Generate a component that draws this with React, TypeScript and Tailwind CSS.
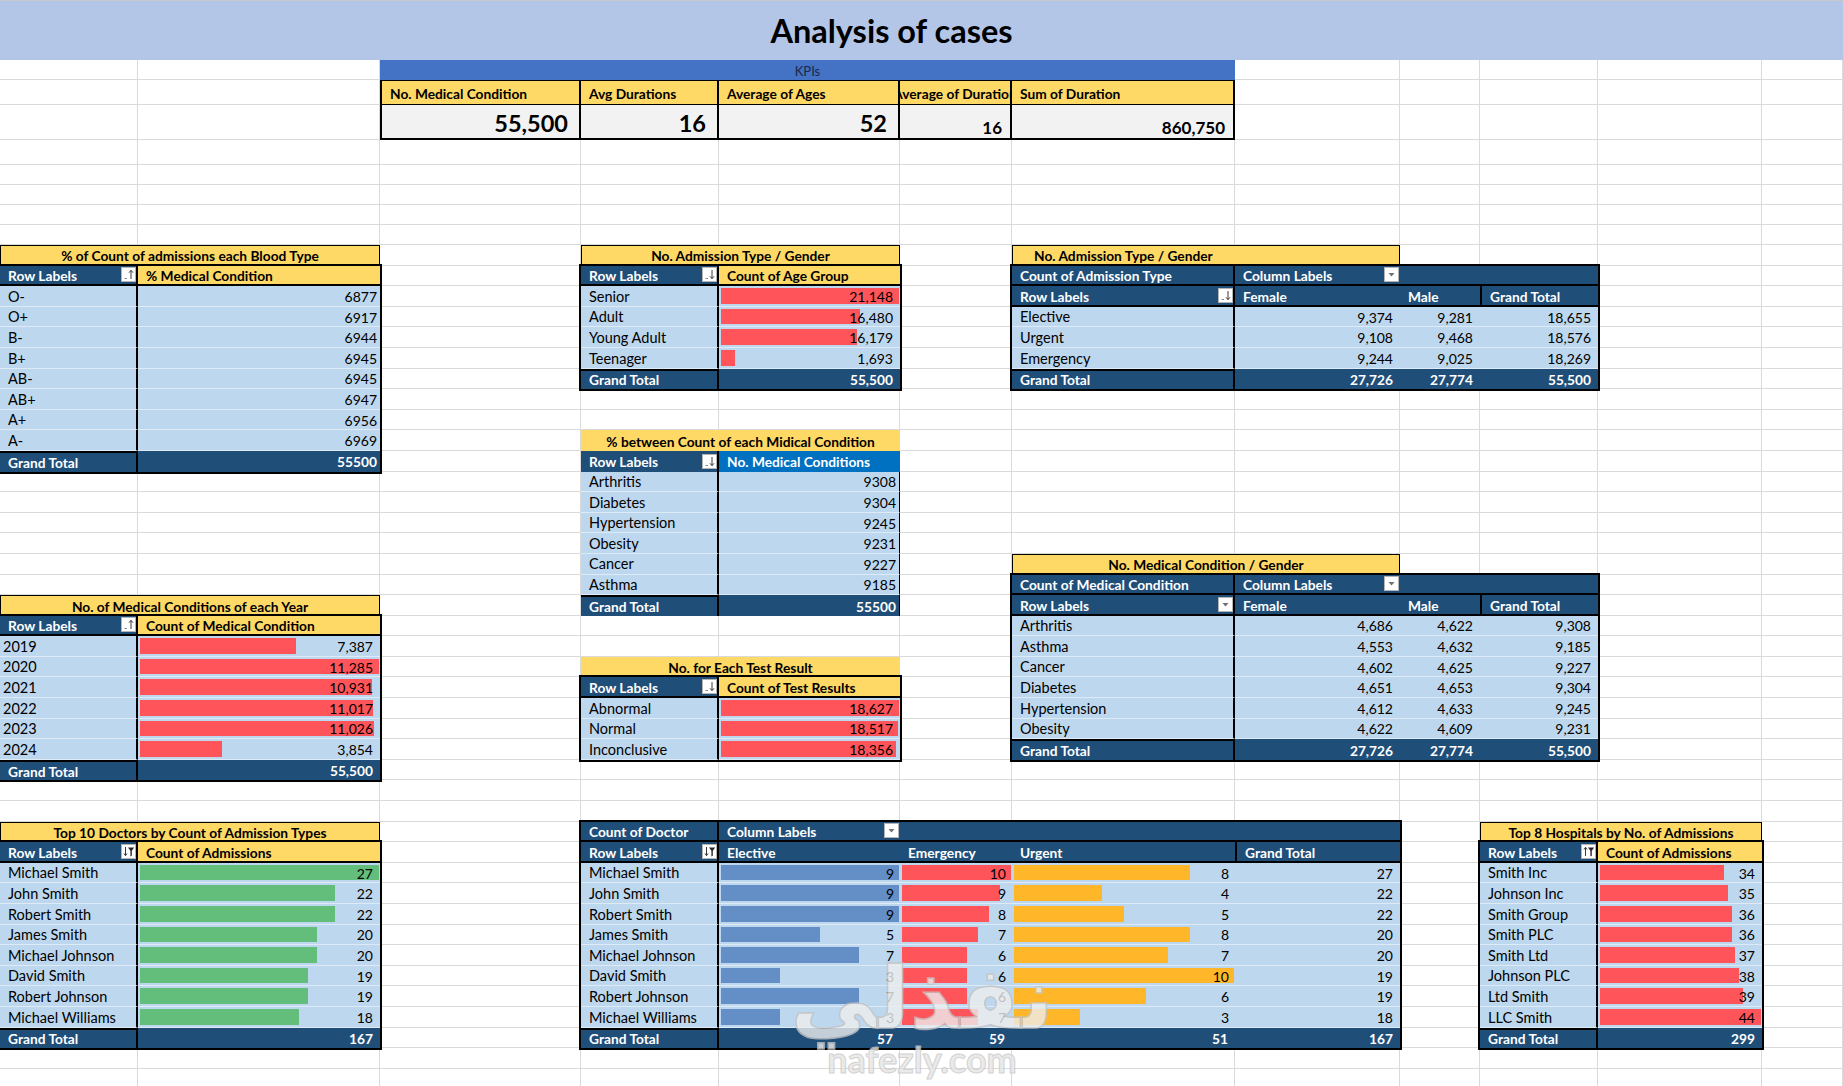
import React from 'react';

type IconKind = 'sortDown' | 'sortUp' | 'drop' | 'filterDown' | 'filterUp';
type BarSpec = { color: string; max: number };
type Row = { label: string; value: string; n: number };

const RH = 'h-[20.6px]';
const HB = 'text-[13.75px] font-bold leading-none';
const LB = 'text-[14.5px] leading-none';

function Glyph({ kind }: { kind: IconKind }) {
  if (kind === 'drop') {
    return (
      <svg width="9" height="9" viewBox="0 0 9 9">
        <path d="M1.5 3h6L4.5 6.5z" fill="#707070" />
      </svg>
    );
  }
  if (kind === 'sortDown' || kind === 'sortUp') {
    return (
      <svg width="13" height="13" viewBox="0 0 13 13">
        <path d="M2.5 10.5h2.5" stroke="#8a8a8a" strokeWidth="1" />
        {kind === 'sortDown' ? (
          <path d="M9 2v8.5M7 8.3l2 2.4 2-2.4" stroke="#3a3a3a" strokeWidth="1" fill="none" />
        ) : (
          <path d="M9 11V2.5M7 4.7l2-2.4 2 2.4" stroke="#3a3a3a" strokeWidth="1" fill="none" />
        )}
      </svg>
    );
  }
  return (
    <svg width="13" height="13" viewBox="0 0 13 13">
      {kind === 'filterDown' ? (
        <path d="M3.5 2v8.5M2 8.5l1.5 2.2 1.5-2.2" stroke="#3a3a3a" strokeWidth="1" fill="none" />
      ) : (
        <path d="M3.5 11V2.5M2 4.5l1.5-2.2 1.5 2.2" stroke="#3a3a3a" strokeWidth="1" fill="none" />
      )}
      <path d="M6 2.5h6.2l-2.4 3.3v4.9l-1.4 0.9V5.8z" fill="#262626" />
    </svg>
  );
}

function IconBox({ kind }: { kind: IconKind }) {
  return (
    <span className="ml-auto shrink-0 w-[15px] h-[15px] bg-white border border-[#b4b4b4] flex items-center justify-center">
      <Glyph kind={kind} />
    </span>
  );
}

function ValueCell({ value, n, bar, pad, extra }: { value: string; n: number; bar?: BarSpec; pad: string; extra?: string }) {
  const frac = bar ? n / bar.max : 0;
  return (
    <div className={`relative flex items-center justify-end bg-[#bdd7ee] border-b border-b-[#deebf7] text-[14px] leading-none ${pad} ${extra ?? ''}`}>
      {bar && (
        <div className="absolute left-[2px] right-[1px] top-[2px] bottom-[2px]">
          <div className={`h-full ${bar.color}`} style={{ width: `${frac * 100}%` }} />
        </div>
      )}
      <span className="relative pt-[2px]">{value}</span>
    </div>
  );
}

type T2Props = {
  pos: string;
  cols: string;
  title: string;
  titleBorder?: boolean;
  icon: IconKind;
  valueHead: string;
  valueHeadClass: string;
  rows: Row[];
  total?: string;
  bar?: BarSpec;
  numPad: string;
  labelPad?: string;
  ring?: boolean;
  valueEdge?: string;
};

function Table2(p: T2Props) {
  const ring = p.ring !== false;
  return (
    <div className={`${p.pos} self-start flex flex-col`}>
      <div
        className={`${RH} bg-[#ffd966] flex items-center justify-center ${HB} ${
          p.titleBorder !== false ? 'border border-black' : ''
        }`}
      >
        <span className="pt-[2px] whitespace-nowrap">{p.title}</span>
      </div>
      <div className={ring ? 'ring-2 ring-black' : ''}>
        <div className={`grid ${p.cols} ${RH} ${HB} ${ring ? 'border-b-2 border-black' : ''}`}>
          <div className="bg-[#1f4e78] text-white flex items-center pl-[8px] border-r-2 border-black">
            <span className="pt-[2px] whitespace-nowrap">Row Labels</span>
            <IconBox kind={p.icon} />
          </div>
          <div className={`flex items-center pl-[8px] ${p.valueHeadClass}`}>
            <span className="pt-[2px] whitespace-nowrap">{p.valueHead}</span>
          </div>
        </div>
        {p.rows.map((r) => (
          <div key={r.label} className={`grid ${p.cols} ${RH}`}>
            <div
              className={`bg-[#bdd7ee] border-b border-b-[#deebf7] border-r-2 border-r-black flex items-center ${LB} ${
                p.labelPad ?? 'pl-[8px]'
              }`}
            >
              <span className="pt-[2px] whitespace-nowrap">{r.label}</span>
            </div>
            <ValueCell value={r.value} n={r.n} bar={p.bar} pad={p.numPad} extra={p.valueEdge} />
          </div>
        ))}
        {p.total && (
          <div className={`grid ${p.cols} ${RH} bg-[#1f4e78] text-white ${HB}`}>
            <div className="flex items-center pl-[8px] border-r-2 border-r-black border-t-2 border-t-black">
              <span className="pt-[1px]">Grand Total</span>
            </div>
            <div className={`flex items-center justify-end ${p.numPad} ${p.valueEdge ?? ''}`}>
              <span className="pt-[2px]">{p.total}</span>
            </div>
          </div>
        )}
      </div>
    </div>
  );
}

type R4 = { label: string; f: string; m: string; t: string };

function Pivot4({
  titlePos,
  bodyPos,
  title,
  titleCentered,
  head1,
  icon,
  rows,
  total,
}: {
  titlePos: string;
  bodyPos: string;
  title: string;
  titleCentered: boolean;
  head1: string;
  icon: IconKind;
  rows: R4[];
  total: [string, string, string];
}) {
  const cols = 'grid-cols-[223px_165px_80px_118px]';
  const cell = 'flex items-center justify-end pr-[7px] bg-[#bdd7ee] border-b border-b-[#deebf7] text-[14px] leading-none';
  return (
    <>
      <div
        className={`${titlePos} self-start ${RH} bg-[#ffd966] border border-black ${HB} flex items-center ${
          titleCentered ? 'justify-center' : 'pl-[21px]'
        }`}
      >
        <span className="pt-[2px] whitespace-nowrap">{title}</span>
      </div>
      <div className={`${bodyPos} self-start ring-2 ring-black`}>
        <div className={`grid ${cols} ${RH} bg-[#1f4e78] text-white ${HB} border-b-2 border-black`}>
          <div className="flex items-center pl-[8px] border-r-2 border-black">
            <span className="pt-[2px] whitespace-nowrap">{head1}</span>
          </div>
          <div className="flex items-center pl-[8px] pr-[1px]">
            <span className="pt-[2px] whitespace-nowrap">Column Labels</span>
            <IconBox kind="drop" />
          </div>
          <div />
          <div />
        </div>
        <div className={`grid ${cols} ${RH} bg-[#1f4e78] text-white ${HB} border-b-2 border-black`}>
          <div className="flex items-center pl-[8px] border-r-2 border-black">
            <span className="pt-[2px]">Row Labels</span>
            <IconBox kind={icon} />
          </div>
          <div className="flex items-center pl-[8px]">
            <span className="pt-[2px]">Female</span>
          </div>
          <div className="flex items-center pl-[8px]">
            <span className="pt-[2px]">Male</span>
          </div>
          <div className="flex items-center pl-[8px] border-l-2 border-black">
            <span className="pt-[2px]">Grand Total</span>
          </div>
        </div>
        {rows.map((r) => (
          <div key={r.label} className={`grid ${cols} ${RH}`}>
            <div className={`bg-[#bdd7ee] border-b border-b-[#deebf7] border-r-2 border-r-black flex items-center pl-[8px] ${LB}`}>
              <span className="pt-[2px]">{r.label}</span>
            </div>
            <div className={cell}>
              <span className="pt-[2px]">{r.f}</span>
            </div>
            <div className={cell}>
              <span className="pt-[2px]">{r.m}</span>
            </div>
            <div className={cell}>
              <span className="pt-[2px]">{r.t}</span>
            </div>
          </div>
        ))}
        <div className={`grid ${cols} ${RH} bg-[#1f4e78] text-white ${HB}`}>
          <div className="flex items-center pl-[8px] border-r-2 border-r-black border-t-2 border-t-black">
            <span className="pt-[1px]">Grand Total</span>
          </div>
          {total.map((t, i) => (
            <div key={i} className="flex items-center justify-end pr-[7px]">
              <span className="pt-[2px]">{t}</span>
            </div>
          ))}
        </div>
      </div>
    </>
  );
}

const docRows = [
  { name: 'Michael Smith', e: 9, em: 10, u: 8, t: 27 },
  { name: 'John Smith', e: 9, em: 9, u: 4, t: 22 },
  { name: 'Robert Smith', e: 9, em: 8, u: 5, t: 22 },
  { name: 'James Smith', e: 5, em: 7, u: 8, t: 20 },
  { name: 'Michael Johnson', e: 7, em: 6, u: 7, t: 20 },
  { name: 'David Smith', e: 3, em: 6, u: 10, t: 19 },
  { name: 'Robert Johnson', e: 7, em: 6, u: 6, t: 19 },
  { name: 'Michael Williams', e: 3, em: 7, u: 3, t: 18 },
];

function CountDoctor() {
  const cols = 'grid-cols-[138px_181px_112px_223px_165px]';
  const head = `grid ${cols} ${RH} bg-[#1f4e78] text-white ${HB} border-b-2 border-black`;
  return (
    <div className="col-start-4 col-span-5 row-start-38 row-span-11 self-start ring-2 ring-black">
      <div className={head}>
        <div className="flex items-center pl-[8px] border-r-2 border-black">
          <span className="pt-[2px] whitespace-nowrap">Count of Doctor</span>
        </div>
        <div className="flex items-center pl-[8px] pr-[1px]">
          <span className="pt-[2px] whitespace-nowrap">Column Labels</span>
          <IconBox kind="drop" />
        </div>
        <div />
        <div />
        <div />
      </div>
      <div className={head}>
        <div className="flex items-center pl-[8px] border-r-2 border-black">
          <span className="pt-[2px]">Row Labels</span>
          <IconBox kind="filterDown" />
        </div>
        <div className="flex items-center pl-[8px]">
          <span className="pt-[2px]">Elective</span>
        </div>
        <div className="flex items-center pl-[8px]">
          <span className="pt-[2px]">Emergency</span>
        </div>
        <div className="flex items-center pl-[8px]">
          <span className="pt-[2px]">Urgent</span>
        </div>
        <div className="flex items-center pl-[8px] border-l-2 border-black">
          <span className="pt-[2px]">Grand Total</span>
        </div>
      </div>
      {docRows.map((r) => (
        <div key={r.name} className={`grid ${cols} ${RH}`}>
          <div className={`bg-[#bdd7ee] border-b border-b-[#deebf7] border-r-2 border-r-black flex items-center pl-[8px] ${LB}`}>
            <span className="pt-[2px] whitespace-nowrap">{r.name}</span>
          </div>
          <ValueCell value={String(r.e)} n={r.e} bar={{ color: 'bg-[#638ec6]', max: 9 }} pad="pr-[6px]" />
          <ValueCell value={String(r.em)} n={r.em} bar={{ color: 'bg-[#ff555a]', max: 10 }} pad="pr-[6px]" />
          <ValueCell value={String(r.u)} n={r.u} bar={{ color: 'bg-[#ffb628]', max: 10 }} pad="pr-[6px]" />
          <ValueCell value={String(r.t)} n={r.t} pad="pr-[7px]" />
        </div>
      ))}
      <div className={`grid ${cols} ${RH} bg-[#1f4e78] text-white ${HB}`}>
        <div className="flex items-center pl-[8px] border-r-2 border-r-black border-t-2 border-t-black">
          <span className="pt-[1px]">Grand Total</span>
        </div>
        {['57', '59', '51', '167'].map((t, i) => (
          <div key={i} className="flex items-center justify-end pr-[7px]">
            <span className="pt-[2px]">{t}</span>
          </div>
        ))}
      </div>
    </div>
  );
}

function Kpis() {
  const lab = 'bg-[#ffd966] border-t border-b border-r-2 border-black flex items-end pb-[3px] text-[13.75px] font-bold leading-none whitespace-nowrap overflow-hidden';
  const val = 'bg-[#f2f2f2] border-b-2 border-r-2 border-black flex items-end justify-end font-bold leading-none';
  return (
    <>
      <div className="col-start-3 col-span-5 row-start-2 bg-[#4472c4] flex items-center justify-center text-[13px] leading-none text-[#18284a]">
        <span className="pt-[3px]">KPIs</span>
      </div>
      <div className="col-start-3 col-span-5 row-start-3 row-span-2 grid grid-cols-subgrid grid-rows-subgrid">
        <div className={`${lab} border-l-2 pl-[8px]`}>No. Medical Condition</div>
        <div className={`${lab} pl-[8px]`}>Avg Durations</div>
        <div className={`${lab} pl-[8px]`}>Average of Ages</div>
        <div className={`${lab} justify-center`}>Average of Duration</div>
        <div className={`${lab} pl-[8px]`}>Sum of Duration</div>
        <div className={`${val} border-l-2 pr-[11px] pb-[3px] text-[23.5px]`}>55,500</div>
        <div className={`${val} pr-[11px] pb-[3px] text-[23.5px]`}>16</div>
        <div className={`${val} pr-[11px] pb-[3px] text-[23.5px]`}>52</div>
        <div className={`${val} pr-[8px] pb-[2px] text-[17px]`}>16</div>
        <div className={`${val} pr-[8px] pb-[2px] text-[17px]`}>860,750</div>
      </div>
    </>
  );
}

function Watermark() {
  return (
    <div className="absolute left-[797px] top-[960px] w-[250px] flex flex-col items-center pointer-events-none opacity-80">
      <div
        dir="rtl"
        className="text-[86px] leading-[0.9] font-bold text-[#eeeeee] [-webkit-text-stroke:1.5px_#c4c4c4] font-['DejaVu_Sans',sans-serif]"
      >
        نفذلي
      </div>
      <div className="mt-[4px] text-[36px] leading-none font-bold text-[#e6e6e6] [-webkit-text-stroke:1px_#c8c8c8]">nafezly.com</div>
    </div>
  );
}

const r = (label: string, value: string): Row => ({ label, value, n: Number(value.replace(/,/g, '')) });

export default function App() {
  return (
    <div className="relative w-[1843px] h-[1086px] overflow-hidden bg-white text-black font-['Lato',sans-serif]">
      <div className="grid h-full grid-cols-[138px_242px_201px_138px_181px_112px_223px_165px_80px_118px_164px_81px] grid-rows-[60px_20px_25px_35px_25px_20px_20px_20px_20px_repeat(41,20.6px)]">
        {Array.from({ length: 400 }).map((_, i) => (
          <div key={i} className="border-r border-b border-[#dadada]" />
        ))}

        <div className="col-start-1 col-span-12 row-start-1 bg-[#b4c6e7] border-t border-[#c8c8c8] flex items-center justify-center pr-[60px]">
          <span className="text-[32.5px] font-bold leading-none pt-[2px]">Analysis of cases</span>
        </div>

        <Kpis />

        <Table2
          pos="col-start-1 col-span-2 row-start-10 row-span-11"
          cols="grid-cols-[138px_242px]"
          title="% of Count of admissions each Blood Type"
          icon="sortUp"
          valueHead="% Medical Condition"
          valueHeadClass="bg-[#ffd966] text-black"
          rows={[
            r('O-', '6877'),
            r('O+', '6917'),
            r('B-', '6944'),
            r('B+', '6945'),
            r('AB-', '6945'),
            r('AB+', '6947'),
            r('A+', '6956'),
            r('A-', '6969'),
          ]}
          total="55500"
          numPad="pr-[3px]"
        />

        <Table2
          pos="col-start-4 col-span-2 row-start-10 row-span-7"
          cols="grid-cols-[138px_181px]"
          title="No. Admission Type / Gender"
          icon="sortDown"
          valueHead="Count of Age Group"
          valueHeadClass="bg-[#ffd966] text-black"
          rows={[r('Senior', '21,148'), r('Adult', '16,480'), r('Young Adult', '16,179'), r('Teenager', '1,693')]}
          total="55,500"
          bar={{ color: 'bg-[#ff555a]', max: 21148 }}
          numPad="pr-[7px]"
        />

        <Pivot4
          titlePos="col-start-7 col-span-2 row-start-10"
          bodyPos="col-start-7 col-span-4 row-start-11 row-span-6"
          title="No. Admission Type / Gender"
          titleCentered={false}
          head1="Count of Admission Type"
          icon="sortDown"
          rows={[
            { label: 'Elective', f: '9,374', m: '9,281', t: '18,655' },
            { label: 'Urgent', f: '9,108', m: '9,468', t: '18,576' },
            { label: 'Emergency', f: '9,244', m: '9,025', t: '18,269' },
          ]}
          total={['27,726', '27,774', '55,500']}
        />

        <Table2
          pos="col-start-4 col-span-2 row-start-19 row-span-9"
          cols="grid-cols-[138px_181px]"
          title="% between Count of each Midical Condition"
          titleBorder={false}
          ring={false}
          icon="sortDown"
          valueHead="No. Medical Conditions"
          valueHeadClass="bg-[#0070c0] text-white"
          rows={[
            r('Arthritis', '9308'),
            r('Diabetes', '9304'),
            r('Hypertension', '9245'),
            r('Obesity', '9231'),
            r('Cancer', '9227'),
            r('Asthma', '9185'),
          ]}
          total="55500"
          numPad="pr-[3px]"
          valueEdge="border-r border-r-black"
        />

        <Pivot4
          titlePos="col-start-7 col-span-2 row-start-25"
          bodyPos="col-start-7 col-span-4 row-start-26 row-span-9"
          title="No. Medical Condition / Gender"
          titleCentered={true}
          head1="Count of Medical Condition"
          icon="drop"
          rows={[
            { label: 'Arthritis', f: '4,686', m: '4,622', t: '9,308' },
            { label: 'Asthma', f: '4,553', m: '4,632', t: '9,185' },
            { label: 'Cancer', f: '4,602', m: '4,625', t: '9,227' },
            { label: 'Diabetes', f: '4,651', m: '4,653', t: '9,304' },
            { label: 'Hypertension', f: '4,612', m: '4,633', t: '9,245' },
            { label: 'Obesity', f: '4,622', m: '4,609', t: '9,231' },
          ]}
          total={['27,726', '27,774', '55,500']}
        />

        <Table2
          pos="col-start-1 col-span-2 row-start-27 row-span-9"
          cols="grid-cols-[138px_242px]"
          title="No. of Medical Conditions of each Year"
          icon="sortUp"
          valueHead="Count of Medical Condition"
          valueHeadClass="bg-[#ffd966] text-black"
          rows={[
            r('2019', '7,387'),
            r('2020', '11,285'),
            r('2021', '10,931'),
            r('2022', '11,017'),
            r('2023', '11,026'),
            r('2024', '3,854'),
          ]}
          total="55,500"
          bar={{ color: 'bg-[#ff555a]', max: 11285 }}
          numPad="pr-[7px]"
          labelPad="pl-[3px]"
        />

        <Table2
          pos="col-start-4 col-span-2 row-start-30 row-span-5"
          cols="grid-cols-[138px_181px]"
          title="No. for Each Test Result"
          titleBorder={false}
          icon="sortDown"
          valueHead="Count of Test Results"
          valueHeadClass="bg-[#ffd966] text-black"
          rows={[r('Abnormal', '18,627'), r('Normal', '18,517'), r('Inconclusive', '18,356')]}
          bar={{ color: 'bg-[#ff555a]', max: 18627 }}
          numPad="pr-[7px]"
        />

        <Table2
          pos="col-start-1 col-span-2 row-start-38 row-span-11"
          cols="grid-cols-[138px_242px]"
          title="Top 10 Doctors by Count of Admission Types"
          icon="filterDown"
          valueHead="Count of Admissions"
          valueHeadClass="bg-[#ffd966] text-black"
          rows={[
            r('Michael Smith', '27'),
            r('John Smith', '22'),
            r('Robert Smith', '22'),
            r('James Smith', '20'),
            r('Michael Johnson', '20'),
            r('David Smith', '19'),
            r('Robert Johnson', '19'),
            r('Michael Williams', '18'),
          ]}
          total="167"
          bar={{ color: 'bg-[#63be7b]', max: 27 }}
          numPad="pr-[7px]"
        />

        <CountDoctor />

        <Table2
          pos="col-start-10 col-span-2 row-start-38 row-span-11"
          cols="grid-cols-[118px_164px]"
          title="Top 8 Hospitals by No. of Admissions"
          icon="filterUp"
          valueHead="Count of Admissions"
          valueHeadClass="bg-[#ffd966] text-black"
          rows={[
            r('Smith Inc', '34'),
            r('Johnson Inc', '35'),
            r('Smith Group', '36'),
            r('Smith PLC', '36'),
            r('Smith Ltd', '37'),
            r('Johnson PLC', '38'),
            r('Ltd Smith', '39'),
            r('LLC Smith', '44'),
          ]}
          total="299"
          bar={{ color: 'bg-[#ff555a]', max: 44 }}
          numPad="pr-[7px]"
        />
      </div>
      <Watermark />
    </div>
  );
}
